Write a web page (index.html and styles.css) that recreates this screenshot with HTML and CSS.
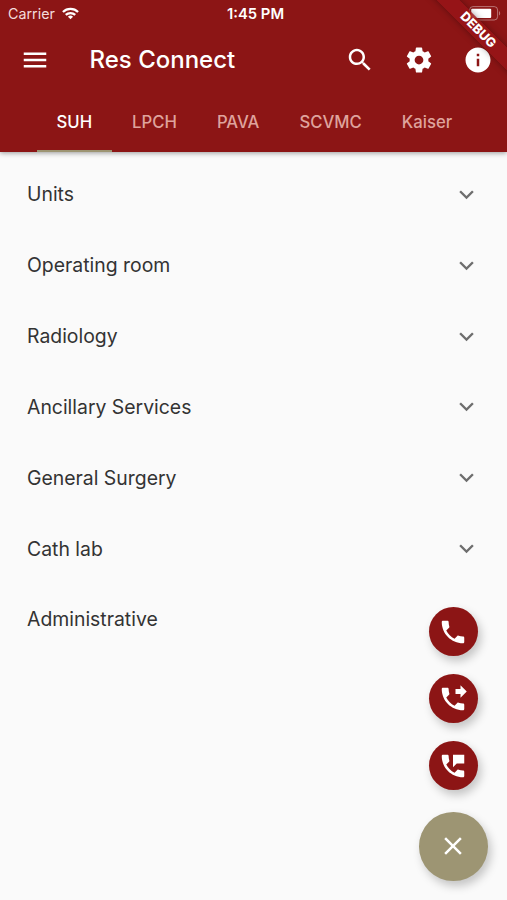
FILE: index.html
```
<!DOCTYPE html>
<html lang="en">
<head>
<meta charset="utf-8"/>
<meta content="width=device-width, initial-scale=1.0" name="viewport"/>
<title>Res Connect</title>
<link rel="stylesheet" href="styles.css">
</head>
<body>
<header class="header">
    <div class="status-bar">
        <div class="carrier">
            <span>Carrier</span>
            <svg class="wifi" viewBox="0 0 18 13" fill="none" stroke="currentColor" stroke-width="2.4">
                <path d="M1 4.9a11.4 11.4 0 0 1 16 0"/>
                <path d="M4 8a7.2 7.2 0 0 1 10 0"/>
                <path d="M9 12.6L6.3 10a3.8 3.8 0 0 1 5.4 0z" fill="currentColor" stroke="none"/>
            </svg>
        </div>
        <div class="time">1:45 PM</div>
        <svg class="battery" viewBox="0 0 32 15">
            <rect x=".6" y=".6" width="28" height="13.4" rx="3.4" fill="none" stroke="#fff" stroke-opacity=".4"/>
            <rect x="2.2" y="2.7" width="20" height="9.4" rx="1" fill="#fff"/>
            <path d="M30 5v4.6c1.6-.8 1.6-3.8 0-4.6z" fill="#fff" fill-opacity=".4"/>
        </svg>
    </div>
    <div class="toolbar">
        <svg class="icon" viewBox="0 0 24 24"><path d="M3 18h18v-2H3v2zm0-5h18v-2H3v2zm0-7v2h18V6H3z"/></svg>
        <h1 class="title">Res Connect</h1>
        <div class="actions">
            <svg class="icon" viewBox="0 0 24 24"><path d="M15.5 14h-.79l-.28-.27C15.41 12.59 16 11.11 16 9.5 16 5.91 13.09 3 9.5 3S3 5.91 3 9.5 5.91 16 9.5 16c1.61 0 3.09-.59 4.23-1.57l.27.28v.79l5 4.99L20.49 19l-4.99-5zm-6 0C7.01 14 5 11.99 5 9.5S7.01 5 9.5 5 14 7.01 14 9.5 11.99 14 9.5 14z"/></svg>
            <svg class="icon" viewBox="0 0 24 24"><path d="M19.43 12.98c.04-.32.07-.64.07-.98s-.03-.66-.07-.98l2.11-1.65c.19-.15.24-.42.12-.64l-2-3.46c-.12-.22-.39-.3-.61-.22l-2.49 1c-.52-.4-1.08-.73-1.69-.98l-.38-2.65C14.46 2.18 14.25 2 14 2h-4c-.25 0-.46.18-.49.42l-.38 2.65c-.61.25-1.17.59-1.69.98l-2.49-1c-.23-.09-.49 0-.61.22l-2 3.46c-.13.22-.07.49.12.64l2.11 1.65c-.04.32-.07.65-.07.98s.03.66.07.98l-2.11 1.65c-.19.15-.24.42-.12.64l2 3.46c.12.22.39.3.61.22l2.49-1c.52.4 1.08.73 1.69.98l.38 2.65c.03.24.24.42.49.42h4c.25 0 .46-.18.49-.42l.38-2.65c.61-.25 1.17-.59 1.69-.98l2.49 1c.23.09.49 0 .61-.22l2-3.46c.12-.22.07-.49-.12-.64l-2.11-1.65zM12 15.5c-1.93 0-3.5-1.57-3.5-3.5s1.57-3.5 3.5-3.5 3.5 1.57 3.5 3.5-1.57 3.5-3.5 3.5z"/></svg>
            <svg class="icon" viewBox="0 0 24 24"><path d="M12 2C6.48 2 2 6.48 2 12s4.48 10 10 10 10-4.48 10-10S17.52 2 12 2zm1 15h-2v-6h2v6zm0-8h-2V7h2v2z"/></svg>
        </div>
    </div>
    <nav class="tabs">
        <a class="tab active">SUH</a>
        <a class="tab">LPCH</a>
        <a class="tab">PAVA</a>
        <a class="tab">SCVMC</a>
        <a class="tab">Kaiser</a>
    </nav>
    <div class="debug-corner"><div class="debug-banner">DEBUG</div></div>
</header>

<main class="list">
    <div class="row"><span>Units</span><svg class="chevron" viewBox="0 0 24 24"><path d="M16.59 8.59L12 13.17 7.41 8.59 6 10l6 6 6-6z"/></svg></div>
    <div class="row"><span>Operating room</span><svg class="chevron" viewBox="0 0 24 24"><path d="M16.59 8.59L12 13.17 7.41 8.59 6 10l6 6 6-6z"/></svg></div>
    <div class="row"><span>Radiology</span><svg class="chevron" viewBox="0 0 24 24"><path d="M16.59 8.59L12 13.17 7.41 8.59 6 10l6 6 6-6z"/></svg></div>
    <div class="row"><span>Ancillary Services</span><svg class="chevron" viewBox="0 0 24 24"><path d="M16.59 8.59L12 13.17 7.41 8.59 6 10l6 6 6-6z"/></svg></div>
    <div class="row"><span>General Surgery</span><svg class="chevron" viewBox="0 0 24 24"><path d="M16.59 8.59L12 13.17 7.41 8.59 6 10l6 6 6-6z"/></svg></div>
    <div class="row"><span>Cath lab</span><svg class="chevron" viewBox="0 0 24 24"><path d="M16.59 8.59L12 13.17 7.41 8.59 6 10l6 6 6-6z"/></svg></div>
    <div class="row"><span>Administrative</span></div>
</main>

<!-- Speed dial -->
<div class="speed-dial">
    <button class="fab" type="button" aria-label="Call">
        <svg class="icon" viewBox="0 0 24 24"><path d="M6.62 10.79c1.44 2.83 3.76 5.14 6.59 6.59l2.2-2.2c.27-.27.67-.36 1.02-.24 1.12.37 2.33.57 3.57.57.55 0 1 .45 1 1V20c0 .55-.45 1-1 1-9.39 0-17-7.61-17-17 0-.55.45-1 1-1h3.5c.55 0 1 .45 1 1 0 1.25.2 2.45.57 3.57.11.35.03.74-.25 1.02l-2.2 2.2z"/></svg>
    </button>
    <button class="fab" type="button" aria-label="Forward call">
        <svg class="icon" viewBox="0 0 24 24"><path d="M18 11l5-5-5-5v3h-4v4h4v3zm2 4.5c-1.25 0-2.45-.2-3.57-.57-.35-.11-.74-.03-1.02.24l-2.2 2.2c-2.83-1.44-5.15-3.75-6.59-6.59l2.2-2.21c.28-.26.36-.65.25-1C8.7 6.45 8.5 5.25 8.5 4c0-.55-.45-1-1-1H4c-.55 0-1 .45-1 1 0 9.39 7.61 17 17 17 .55 0 1-.45 1-1v-3.5c0-.55-.45-1-1-1z"/></svg>
    </button>
    <button class="fab" type="button" aria-label="Message">
        <svg class="icon" viewBox="0 0 24 24"><path d="M20 15.5c-1.25 0-2.45-.2-3.57-.57-.35-.11-.74-.03-1.02.24l-2.2 2.2c-2.83-1.44-5.15-3.75-6.59-6.58l2.2-2.21c.28-.27.36-.66.25-1.01C8.7 6.45 8.5 5.25 8.5 4c0-.55-.45-1-1-1H4c-.55 0-1 .45-1 1 0 9.39 7.61 17 17 17 .55 0 1-.45 1-1v-3.5c0-.55-.45-1-1-1zM12 3v10l3-3h6V3h-9z"/></svg>
    </button>
    <button class="fab fab-main" type="button" aria-label="Close">
        <svg class="icon" viewBox="0 0 24 24"><path d="M19 6.41L17.59 5 12 10.59 6.41 5 5 6.41 10.59 12 5 17.59 6.41 19 12 13.41 17.59 19 19 17.59 13.41 12z"/></svg>
    </button>
</div>
</body>
</html>
```
FILE: styles.css
```
body {
    margin: 0;
    height: 900px;
    overflow: hidden;
    background-color: #fafafa;
    color: #333;
    font-family: Inter, sans-serif;
}

.header {
    position: relative;
    display: flex;
    flex-direction: column;
    height: 152px;
    background-color: #8c1515;
    color: #fff;
    box-shadow: 0 1px 5px rgba(0, 0, 0, 0.4);
}

.status-bar {
    display: grid;
    grid-template-columns: 1fr auto 1fr;
    align-items: center;
    height: 27px;
    padding: 0 6px 0 8px;
    font-size: 14.3px;
}

.carrier {
    display: flex;
    align-items: center;
    gap: 7px;
    color: #f3dcdc;
}

.wifi {
    width: 17px;
    height: 13px;
    color: #fff;
}

.time {
    padding-left: 2px;
    font-weight: 600;
    font-size: 14.8px;
}

.battery {
    justify-self: end;
    width: 32px;
    height: 15px;
}

.toolbar {
    display: flex;
    align-items: center;
    height: 65px;
    padding: 0 14.5px 0 20px;
}

.icon {
    display: block;
    width: 30px;
    height: 30px;
    fill: currentColor;
}

.title {
    margin: 0 0 0 39.5px;
    font-size: 24px;
    font-weight: 500;
}

.actions {
    display: flex;
    gap: 29px;
    margin-left: auto;
}

.tabs {
    display: flex;
    height: 60px;
    padding-left: 36.5px;
}

.tab {
    box-sizing: border-box;
    padding: 0 20px;
    border-bottom: 2px solid transparent;
    color: #dfa39d;
    font-size: 16.7px;
    font-weight: 500;
    line-height: 60px;
}

.tab.active {
    border-color: #9d9573;
    color: #fff;
}

.debug-corner {
    position: absolute;
    top: 0;
    right: 0;
    width: 90px;
    height: 90px;
    overflow: hidden;
}

.debug-banner {
    position: absolute;
    top: 22px;
    left: -9px;
    width: 140px;
    height: 16px;
    background-color: rgba(152, 20, 24, 0.85);
    box-shadow: 0 0 7px rgba(0, 0, 0, 0.35);
    font-size: 12.8px;
    font-weight: 800;
    line-height: 16px;
    text-align: center;
    transform: rotate(45deg);
}

.list {
    padding-top: 7px;
}

.row {
    display: flex;
    align-items: center;
    justify-content: space-between;
    height: 70.85px;
    padding: 0 26px 0 27px;
    font-size: 19.4px;
}

.chevron {
    width: 29px;
    height: 29px;
    fill: #6e6e6e;
}

.speed-dial {
    position: fixed;
    right: 19.5px;
    bottom: 19.5px;
    display: flex;
    flex-direction: column;
    align-items: center;
    gap: 18px;
}

.fab {
    display: flex;
    align-items: center;
    justify-content: center;
    width: 49px;
    height: 49px;
    padding: 0;
    border: none;
    border-radius: 50%;
    background-color: #8c1515;
    color: #fff;
    box-shadow: 3px 5px 10px rgba(0, 0, 0, 0.22);
    cursor: pointer;
}

.fab-main {
    width: 68.5px;
    height: 68.5px;
    margin-top: 4px;
    background-color: #9d9573;
}
```
